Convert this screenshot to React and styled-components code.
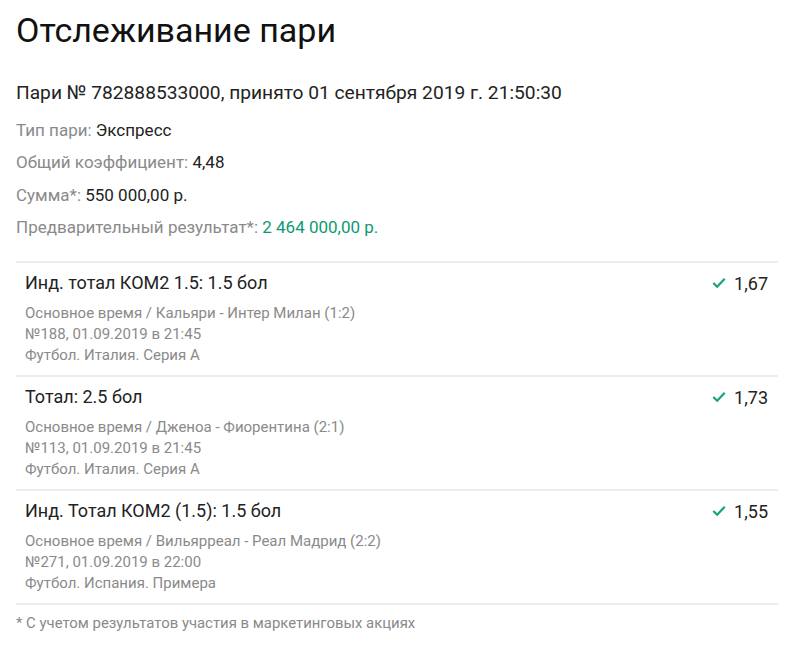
import React from "react"
import styled, { createGlobalStyle } from "styled-components"

const Global = createGlobalStyle`
  body {
    margin: 0;
    background: #fff;
    font-family: Roboto, "Noto Sans", sans-serif;
    color: #222;
  }
`

const Page = styled.div`
  padding: 8px 22px 0 16px;
`

const Title = styled.h1`
  margin: 0;
  font-size: 34px;
  font-weight: 400;
  line-height: 44px;
  color: #111;
`

const BetNumber = styled.div`
  margin-top: 29px;
  font-size: 19.2px;
  line-height: 24px;
  color: #222;
`

const Info = styled.div`
  margin-top: 9px;
  display: flex;
  flex-direction: column;
`

const InfoLine = styled.div`
  font-size: 17px;
  line-height: 32.3px;
  color: #8a8a8a;
`

const Value = styled.span`
  color: ${(p) => (p.$win ? "#0d9a72" : "#222")};
`

const List = styled.div`
  margin-top: 18px;
  border-top: 2px solid #ececec;
`

const Event = styled.div`
  display: flex;
  justify-content: space-between;
  padding: 8px 10px 9px 9px;
  border-bottom: 2px solid #ececec;
`

const EventMain = styled.div`
  display: flex;
  flex-direction: column;
`

const EventName = styled.div`
  font-size: 18px;
  line-height: 24px;
  color: #222;
  margin-bottom: 8px;
`

const EventMeta = styled.div`
  font-size: 15px;
  line-height: 21px;
  color: #8a8a8a;
`

const Odds = styled.div`
  display: flex;
  align-items: center;
  gap: 8px;
  height: 24px;
  font-size: 18px;
  color: #222;
`

const Footnote = styled.div`
  margin-top: 8px;
  font-size: 14.9px;
  line-height: 20px;
  color: #8a8a8a;
`

const Check = () => (
  <svg width="14" height="12" viewBox="0 0 14 12">
    <path d="M1.3 6 L5.2 9.8 L12.7 1.8" fill="none" stroke="#14a37a" strokeWidth="2.2" />
  </svg>
)

const events = [
  {
    name: "Инд. тотал КОМ2 1.5: 1.5 бол",
    match: "Основное время / Кальяри - Интер Милан (1:2)",
    num: "№188, 01.09.2019 в 21:45",
    league: "Футбол. Италия. Серия А",
    odds: "1,67",
  },
  {
    name: "Тотал: 2.5 бол",
    match: "Основное время / Дженоа - Фиорентина (2:1)",
    num: "№113, 01.09.2019 в 21:45",
    league: "Футбол. Италия. Серия А",
    odds: "1,73",
  },
  {
    name: "Инд. Тотал КОМ2 (1.5): 1.5 бол",
    match: "Основное время / Вильярреал - Реал Мадрид (2:2)",
    num: "№271, 01.09.2019 в 22:00",
    league: "Футбол. Испания. Примера",
    odds: "1,55",
  },
]

const App = () => {
  return (
    <>
      <Global />
      <Page>
        <Title>Отслеживание пари</Title>
        <BetNumber>Пари № 782888533000, принято 01 сентября 2019 г. 21:50:30</BetNumber>
        <Info>
          <InfoLine>
            Тип пари: <Value>Экспресс</Value>
          </InfoLine>
          <InfoLine>
            Общий коэффициент: <Value>4,48</Value>
          </InfoLine>
          <InfoLine>
            Сумма*: <Value>550 000,00 р.</Value>
          </InfoLine>
          <InfoLine>
            Предварительный результат*: <Value $win>2 464 000,00 р.</Value>
          </InfoLine>
        </Info>
        <List>
          {events.map((e) => (
            <Event key={e.num}>
              <EventMain>
                <EventName>{e.name}</EventName>
                <EventMeta>{e.match}</EventMeta>
                <EventMeta>{e.num}</EventMeta>
                <EventMeta>{e.league}</EventMeta>
              </EventMain>
              <Odds>
                <Check />
                {e.odds}
              </Odds>
            </Event>
          ))}
        </List>
        <Footnote>* С учетом результатов участия в маркетинговых акциях</Footnote>
      </Page>
    </>
  )
}

export default App
